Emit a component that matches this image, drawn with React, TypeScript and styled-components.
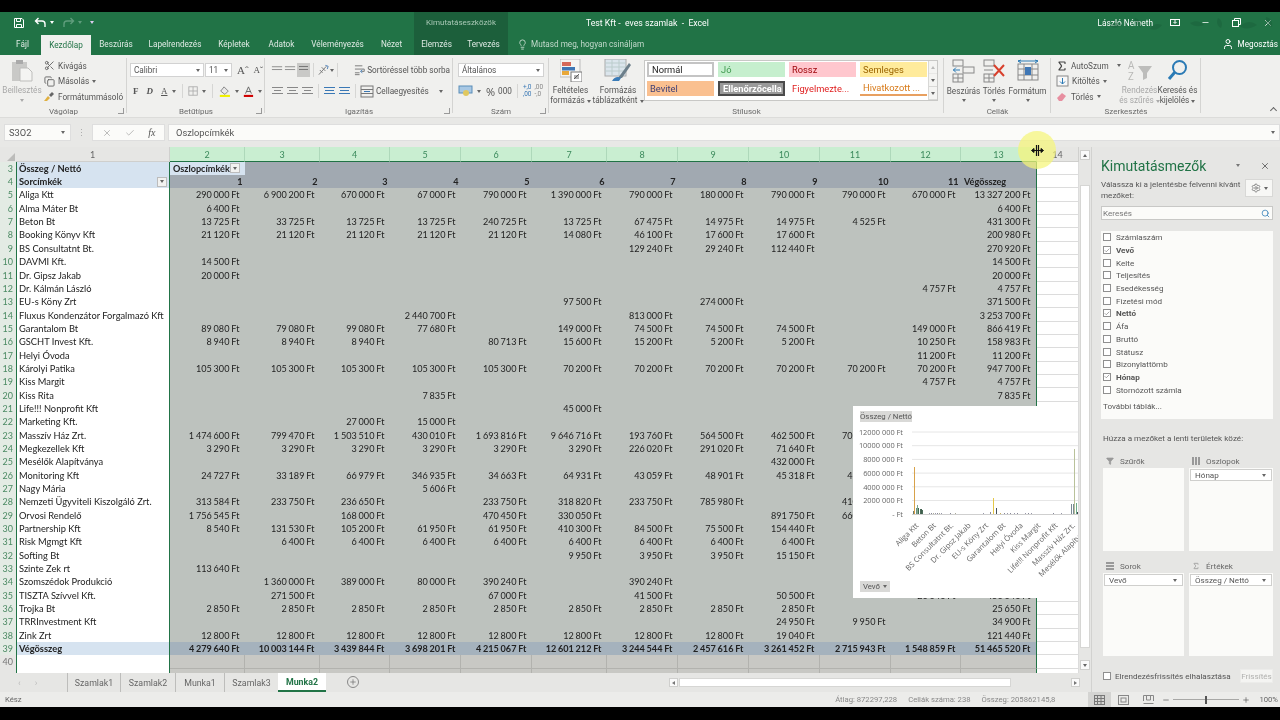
import React from 'react';
import styled, { createGlobalStyle } from 'styled-components';
import { Copy, Lightbulb, Minus, Plus, Scissors, Search, User, X, Check, Filter, Sigma, Settings } from 'lucide-react';

const GlobalStyle = createGlobalStyle`
  html, body { margin: 0; padding: 0; background: #000; }
  * { box-sizing: border-box; }
  #root { width: 1280px; height: 720px; overflow: hidden; }
`;

const uiFont = `Roboto, "Open Sans", sans-serif`;
const cellFont = `Lato, "Open Sans", sans-serif`;

const Page = styled.div`
  width: 1280px;
  height: 720px;
  display: flex;
  flex-direction: column;
  background: #000;
  font-family: ${uiFont};
  font-size: 8.2px;
  color: #444;
  filter: blur(0.3px);
  overflow: hidden;
`;

const BlackBar = styled.div<{ $h: number }>`
  height: ${p => p.$h}px;
  flex: none;
  background: #000;
`;

/* title bar */
const TitleBar = styled.div`
  position: relative;
  height: 21px;
  flex: none;
  display: flex;
  align-items: stretch;
  background: #217346;
  color: #fff;
  overflow: hidden;
`;

const QuickAccess = styled.div`
  width: 414px;
  display: flex;
  align-items: center;
  gap: 3px;
  padding-left: 13px;
  color: #fff;
`;

const ContextBlock = styled.div`
  width: 94px;
  display: flex;
  align-items: center;
  justify-content: center;
  background: #1c5f3b;
  color: #a9c9b6;
  font-size: 8px;
`;

const DocTitle = styled.div`
  margin-left: 78px;
  display: flex;
  align-items: center;
  font-size: 8.7px;
  white-space: pre;
`;

const UserArea = styled.div`
  margin-left: auto;
  margin-right: -3px;
  display: flex;
  align-items: center;
  font-size: 8.3px;
`;

const UserName = styled.span`
  margin-right: 6px;
`;

const WinButton = styled.span`
  width: 31px;
  display: flex;
  justify-content: center;
`;

const Leaves = styled.svg`
  position: absolute;
  right: 0;
  top: 0;
  opacity: 0.45;
  pointer-events: none;
`;

/* tab row */
const TabRow = styled.div`
  height: 22px;
  flex: none;
  display: flex;
  align-items: stretch;
  padding-left: 4px;
  background: #217346;
  color: #e8f1ec;
  position: relative;
`;

const Tab = styled.div<{ $w: number; $active?: boolean }>`
  width: ${p => p.$w}px;
  display: flex;
  align-items: center;
  justify-content: center;
  margin-top: ${p => (p.$active ? 2 : 0)}px;
  background: ${p => (p.$active ? '#f0f0ee' : 'transparent')};
  color: ${p => (p.$active ? '#217346' : '#dfeae4')};
`;

const ContextTabs = styled.div`
  display: flex;
  margin-left: 2px;
  background: #1c5f3b;
`;

const TellMe = styled.div`
  display: flex;
  align-items: center;
  gap: 3px;
  margin-left: 9px;
  color: #c2d9cb;
`;

const Share = styled.div`
  margin-left: auto;
  padding-right: 2px;
  display: flex;
  align-items: center;
  gap: 4px;
  color: #fff;
`;

/* ribbon */
const Ribbon = styled.div`
  height: 63px;
  flex: none;
  display: flex;
  position: relative;
  background: #f0f0ee;
  border-bottom: 1px solid #dcdcda;
  color: #555;
`;

const Group = styled.div<{ $w: number }>`
  width: ${p => p.$w}px;
  flex: none;
  display: flex;
  flex-direction: column;
  position: relative;
  &::after {
    content: '';
    position: absolute;
    right: 0;
    top: 3px;
    bottom: 4px;
    width: 1px;
    background: #d4d4d2;
  }
`;

const GroupBody = styled.div`
  height: 51px;
  display: flex;
  flex: none;
`;

const GroupLabel = styled.div`
  text-align: center;
  color: #6a6a6a;
  font-size: 8px;
  line-height: 11px;
`;

const Launcher = styled.span`
  position: absolute;
  right: 3px;
  bottom: 3px;
  width: 6px;
  height: 6px;
  border-right: 1px solid #999;
  border-bottom: 1px solid #999;
`;

const Caret = styled.span<{ $color?: string }>`
  display: inline-block;
  width: 0;
  height: 0;
  flex: none;
  border-left: 2.5px solid transparent;
  border-right: 2.5px solid transparent;
  border-top: 3px solid ${p => p.$color || '#666'};
`;

const BigButton = styled.div<{ $w: number; $muted?: boolean }>`
  width: ${p => p.$w}px;
  flex: none;
  display: flex;
  flex-direction: column;
  align-items: center;
  padding-top: 4px;
  line-height: 10px;
  text-align: center;
  white-space: nowrap;
  color: ${p => (p.$muted ? '#a8a8a8' : '#555')};
  svg { flex: none; margin-bottom: 3px; }
`;

const SmallColumn = styled.div`
  display: flex;
  flex-direction: column;
  padding-top: 3px;
  gap: 0;
`;

const SmallButton = styled.div<{ $muted?: boolean }>`
  height: 15.5px;
  display: flex;
  align-items: center;
  gap: 3px;
  white-space: nowrap;
  color: ${p => (p.$muted ? '#a8a8a8' : '#555')};
`;

const ControlStack = styled.div`
  display: flex;
  flex-direction: column;
  gap: 7px;
  padding: 8px 3px 0 3px;
  width: 100%;
`;

const ControlRow = styled.div<{ $gap?: number }>`
  height: 14px;
  display: flex;
  align-items: center;
  gap: ${p => p.$gap ?? 4}px;
  white-space: nowrap;
`;

const SelectBox = styled.div<{ $w: number }>`
  width: ${p => p.$w}px;
  height: 14px;
  flex: none;
  display: flex;
  align-items: center;
  justify-content: space-between;
  padding: 0 3px;
  background: #fff;
  border: 1px solid #d2d2d2;
  color: #555;
`;

const Glyph = styled.span<{ $bold?: boolean; $italic?: boolean; $under?: boolean; $size?: number; $ml?: number }>`
  font-family: "Liberation Serif", serif;
  font-size: ${p => p.$size ?? 9}px;
  font-weight: ${p => (p.$bold ? 700 : 400)};
  font-style: ${p => (p.$italic ? 'italic' : 'normal')};
  text-decoration: ${p => (p.$under ? 'underline' : 'none')};
  margin-left: ${p => p.$ml ?? 0}px;
  color: #555;
`;

const Divider = styled.span`
  width: 1px;
  height: 14px;
  background: #d6d6d4;
  margin: 0 2px;
`;

const Spacer = styled.span<{ $w: number }>`
  width: ${p => p.$w}px;
  flex: none;
`;

const ActiveAlign = styled.span`
  display: flex;
  width: 14px;
  height: 14px;
  align-items: center;
  justify-content: center;
  background: #c9c9c7;
`;

const Gallery = styled.div`
  margin: 5px 0 0 0;
  width: 294px;
  height: 41px;
  display: flex;
  background: #fff;
  border: 1px solid #c8c8c6;
`;

const StyleGrid = styled.div`
  flex: 1;
  display: grid;
  grid-template-columns: repeat(4, 67px);
  grid-auto-rows: 15px;
  column-gap: 4px;
  row-gap: 4px;
  padding: 1px 0 0 2px;
`;

const StyleCell = styled.div<{ $bg: string; $fg: string; $border?: string; $bold?: boolean; $under?: string }>`
  height: 15px;
  display: flex;
  align-items: center;
  padding-left: 3px;
  background: ${p => p.$bg};
  color: ${p => p.$fg};
  border: ${p => p.$border || 'none'};
  border-bottom: ${p => (p.$under ? `2px solid ${p.$under}` : p.$border || 'none')};
  font-weight: ${p => (p.$bold ? 700 : 400)};
  font-size: 9.3px;
  white-space: nowrap;
`;

const GalleryScroll = styled.div`
  width: 9px;
  display: flex;
  flex-direction: column;
  border-left: 1px solid #d8d8d6;
  background: #f4f4f2;
`;

const ScrollCell = styled.div<{ $muted?: boolean }>`
  flex: 1;
  display: flex;
  align-items: center;
  justify-content: center;
  border-bottom: 1px solid #d8d8d6;
  opacity: ${p => (p.$muted ? 0.4 : 1)};
`;

const CollapseRibbon = styled.span`
  position: absolute;
  right: 4px;
  bottom: 4px;
  width: 5px;
  height: 5px;
  border-left: 1px solid #666;
  border-top: 1px solid #666;
  transform: rotate(45deg);
`;

/* formula bar */
const FormulaRow = styled.div`
  height: 29px;
  flex: none;
  display: flex;
  align-items: flex-start;
  padding: 6px 0 0 4px;
  background: #e8e8e6;
  color: #555;
  font-size: 9.3px;
`;

const NameBox = styled.div`
  width: 67px;
  height: 17px;
  flex: none;
  display: flex;
  align-items: center;
  justify-content: space-between;
  padding: 0 5px 0 4px;
  background: #fbfbf9;
  border: 1px solid #dedede;
`;

const FormulaDots = styled.div`
  width: 21px;
  height: 17px;
  flex: none;
  display: flex;
  align-items: center;
  justify-content: center;
  color: #aaa;
`;

const FormulaButtons = styled.div`
  width: 73px;
  height: 17px;
  flex: none;
  display: flex;
  align-items: center;
  justify-content: space-around;
  padding: 0 2px;
  background: #fbfbf9;
  border: 1px solid #dedede;
  color: #9a9a9a;
`;

const FormulaInput = styled.div`
  flex: 1;
  height: 17px;
  margin-left: 3px;
  display: flex;
  align-items: center;
  justify-content: space-between;
  padding: 0 4px 0 7px;
  background: #fbfbf9;
  border: 1px solid #dedede;
`;

/* workspace */
const Workspace = styled.div`
  flex: none;
  height: 545px;
  display: flex;
`;

const SheetPane = styled.div`
  width: 1091px;
  flex: none;
  display: flex;
  flex-direction: column;
  position: relative;
  background: #e6e6e4;
`;

const SheetRow = styled.div`
  flex: 1;
  min-height: 0;
  display: flex;
`;

const Sheet = styled.div`
  width: 1079px;
  height: 526px;
  flex: none;
  display: grid;
  grid-template-columns: 16px 154px 75px 75px 70px 71px 71px 75px 71px 71px 71px 71px 70px 76px 42px;
  grid-template-rows: 14.6px;
  grid-auto-rows: 13.35px;
  overflow: hidden;
  background: #fff;
  font-family: ${cellFont};
  font-size: 9.3px;
  color: #222;
`;

const Corner = styled.div`
  background: #e6e6e4;
  position: relative;
  &::after {
    content: '';
    position: absolute;
    right: 1px;
    bottom: 1px;
    border-left: 8px solid transparent;
    border-bottom: 8px solid #bcbcba;
  }
`;

const ColHead = styled.div<{ $on?: boolean }>`
  display: flex;
  align-items: center;
  justify-content: center;
  background: ${p => (p.$on ? '#c9eed1' : '#e6e6e4')};
  color: ${p => (p.$on ? '#3b8a5c' : '#666')};
  border-right: 1px solid ${p => (p.$on ? '#aed8ba' : '#d0d0ce')};
  border-bottom: 1px solid ${p => (p.$on ? '#217346' : '#cfcfcd')};
  font-size: 9px;
  padding-top: 1px;
`;

const RowHead = styled.div<{ $on?: boolean }>`
  display: flex;
  align-items: center;
  justify-content: flex-end;
  padding-right: 3px;
  background: ${p => (p.$on ? '#e3ebe4' : '#e6e6e4')};
  color: ${p => (p.$on ? '#4b8a63' : '#777')};
  font-size: 9px;
  overflow: hidden;
`;

const NameCell = styled.div<{ $kind: 'plain' | 'head' | 'total' | 'blank' }>`
  display: flex;
  align-items: center;
  justify-content: space-between;
  padding-left: 2px;
  background: ${p => (p.$kind === 'plain' || p.$kind === 'blank' ? '#fff' : '#d6e3f0')};
  font-weight: ${p => (p.$kind === 'head' || p.$kind === 'total' ? 700 : 400)};
  border-left: 1px solid #217346;
  border-right: 1.5px solid #217346;
  white-space: nowrap;
  overflow: hidden;
`;

const ValueCell = styled.div<{ $kind: 'plain' | 'head' | 'total' | 'blank' | 'pivotLabel' | 'free'; $end?: boolean; $left?: boolean }>`
  display: flex;
  align-items: center;
  justify-content: ${p => (p.$left ? 'flex-start' : 'flex-end')};
  padding: 0 ${p => (p.$kind === 'head' ? 2.5 : 5.5)}px 0 ${p => (p.$left ? 3 : 0)}px;
  white-space: pre;
  font-size: 9.1px;
  word-spacing: -0.45px;
  overflow: hidden;
  font-weight: ${p => (p.$kind === 'plain' || p.$kind === 'blank' || p.$kind === 'free' ? 400 : 700)};
  background: ${p =>
    ({ plain: '#bdc2be', head: '#a1a9b1', total: '#a5b2bd', blank: '#c8c8c4', pivotLabel: '#d6e3f0', free: '#fff' })[p.$kind]};
  border-right: ${p =>
    p.$end ? '1.5px solid #217346' : p.$kind === 'free' ? '1px solid #dcdcdc' : p.$kind === 'blank' ? '1px solid #b2b2ae' : 'none'};
  border-bottom: ${p =>
    p.$kind === 'free' ? '1px solid #dcdcdc' : p.$kind === 'blank' ? '1px solid #b2b2ae' : 'none'};
`;

const PivotLabel = styled.span`
  flex: 1;
`;

const FilterBtn = styled.span`
  width: 10px;
  height: 10px;
  flex: none;
  display: flex;
  align-items: center;
  justify-content: center;
  margin-right: 2px;
  background: #f2f2f0;
  border: 1px solid #bcbcbc;
`;

const VScroll = styled.div`
  width: 12px;
  height: 526px;
  flex: none;
  display: flex;
  flex-direction: column;
  padding: 3px 1px;
  gap: 0;
  background: #e6e6e4;
`;

const ScrollBtn = styled.div`
  height: 10px;
  flex: none;
  display: flex;
  align-items: center;
  justify-content: center;
  background: #fafafa;
  border: 1px solid #cfcfcd;
`;

const VThumbGap = styled.div`
  height: 25px;
  flex: none;
`;

const VThumb = styled.div`
  flex: 1;
  background: #fff;
  border: 1px solid #d6d6d4;
  margin-bottom: 12px;
`;

/* sheet tabs and horizontal scrollbar */
const TabsBar = styled.div`
  height: 19px;
  flex: none;
  display: flex;
  align-items: stretch;
  background: #e6e6e4;
  color: #666;
  font-size: 8.8px;
`;

const TabNav = styled.div`
  width: 67px;
  display: flex;
  align-items: center;
  gap: 14px;
  padding-left: 18px;
  color: #bbb;
`;

const SheetTab = styled.div<{ $w: number; $active?: boolean }>`
  width: ${p => p.$w}px;
  display: flex;
  align-items: center;
  justify-content: center;
  background: ${p => (p.$active ? '#fff' : 'transparent')};
  color: ${p => (p.$active ? '#217346' : '#666')};
  font-weight: ${p => (p.$active ? 700 : 400)};
  border-left: ${p => (p.$active ? 'none' : '1px solid #bdbdbb')};
  border-bottom: ${p => (p.$active ? '2px solid #217346' : 'none')};
`;

const AddSheet = styled.div`
  width: 12px;
  height: 12px;
  margin: 3px 0 0 21px;
  display: flex;
  align-items: center;
  justify-content: center;
  border: 1px solid #888;
  border-radius: 50%;
`;

const HScroll = styled.div`
  margin-left: auto;
  width: 424px;
  display: flex;
  align-items: center;
  padding: 0 11px 0 2px;
  gap: 1px;
`;

const HThumb = styled.div`
  width: 332px;
  height: 9px;
  background: #fff;
  border: 1px solid #d6d6d4;
`;

const HTrack = styled.div`
  flex: 1;
`;

const HEnd = styled.div`
  width: 9px;
  height: 9px;
  flex: none;
  display: flex;
  align-items: center;
  justify-content: center;
  background: #fafafa;
  border: 1px solid #cfcfcd;
`;

const ArrowSide = styled.span<{ $flip?: boolean }>`
  width: 0;
  height: 0;
  border-top: 2.5px solid transparent;
  border-bottom: 2.5px solid transparent;
  border-left: 3px solid #777;
  transform: ${p => (p.$flip ? 'scaleX(-1)' : 'none')};
`;

/* chart and pointer, both on top of the sheet */
const ChartCard = styled.div`
  position: absolute;
  left: 853px;
  top: 259px;
  width: 225px;
  height: 192px;
  background: #fff;
  overflow: hidden;
`;

const ChartField = styled.div<{ $top: number; $w: number }>`
  position: absolute;
  left: 7px;
  top: ${p => p.$top}px;
  width: ${p => p.$w}px;
  height: 11px;
  display: flex;
  align-items: center;
  justify-content: center;
  gap: 3px;
  background: #d9d9d7;
  color: #555;
  font-size: 7.8px;
  white-space: nowrap;
`;

const PointerHalo = styled.div`
  position: absolute;
  left: 1018px;
  top: -16px;
  width: 38px;
  height: 38px;
  display: flex;
  align-items: center;
  justify-content: center;
  background: rgba(245, 245, 120, 0.72);
  border-radius: 50%;
`;

/* task pane */
const Pane = styled.aside`
  width: 189px;
  flex: none;
  display: flex;
  flex-direction: column;
  padding: 9px 7px 0 9px;
  background: #e6e6e4;
  border-left: 1px solid #d2d2d0;
  color: #555;
`;

const PaneHead = styled.div`
  display: flex;
  align-items: center;
  justify-content: space-between;
  height: 19px;
`;

const PaneTitle = styled.div`
  color: #217346;
  font-size: 14px;
`;

const PaneTools = styled.div`
  display: flex;
  align-items: center;
  gap: 20px;
  padding-right: 3px;
`;

const ChooseRow = styled.div`
  display: flex;
  justify-content: space-between;
  align-items: flex-start;
  margin-top: 4px;
  height: 23px;
  line-height: 10.5px;
  font-size: 8.1px;
`;

const ToolsBtn = styled.div`
  width: 28px;
  height: 18px;
  flex: none;
  display: flex;
  align-items: center;
  justify-content: center;
  gap: 3px;
  background: #f7f7f5;
  border: 1px solid #d8d8d6;
`;

const SearchBox = styled.div`
  margin-top: 4px;
  height: 14px;
  display: flex;
  align-items: center;
  justify-content: space-between;
  padding: 0 2px 0 1px;
  background: #fbfbf9;
  border: 1px solid #c8c8c6;
  color: #777;
  font-size: 8.1px;
`;

const FieldList = styled.div`
  margin-top: 11px;
  height: 188px;
  padding: 0 0 0 2px;
  display: flex;
  flex-direction: column;
  background: #fbfbf9;
  font-size: 8.1px;
`;

const FieldRow = styled.div<{ $on?: boolean }>`
  height: 12.7px;
  flex: none;
  display: flex;
  align-items: center;
  gap: 5px;
  font-weight: ${p => (p.$on ? 700 : 400)};
`;

const Box = styled.span`
  width: 8px;
  height: 8px;
  flex: none;
  display: flex;
  align-items: center;
  justify-content: center;
  background: #fff;
  border: 1px solid #8f8f8f;
  color: #555;
`;

const MoreTables = styled.div`
  margin-top: 5px;
`;

const DragHint = styled.div`
  margin: 14px 0 0 2px;
  font-size: 8.1px;
  height: 12px;
`;

const AreaGrid = styled.div`
  display: grid;
  grid-template-columns: 81px 84px;
  column-gap: 5px;
  margin-top: 9px;
  margin-left: 2px;
`;

const Area = styled.div`
  display: flex;
  flex-direction: column;
  height: 105px;
`;

const AreaHead = styled.div`
  height: 14px;
  display: flex;
  align-items: center;
  gap: 6px;
  padding-left: 3px;
  font-size: 8.1px;
  color: #666;
`;

const AreaBody = styled.div`
  height: 83px;
  padding: 1px;
  background: #fbfbf9;
`;

const AreaChip = styled.div`
  height: 12px;
  display: flex;
  align-items: center;
  justify-content: space-between;
  padding: 0 5px 0 4px;
  background: #fff;
  border: 1px solid #cfcfcd;
  font-size: 8.1px;
`;

const DeferRow = styled.div`
  margin: 3px 0 0 2px;
  display: flex;
  align-items: center;
  gap: 4px;
  height: 18px;
  font-size: 8.1px;
`;

const RefreshBtn = styled.div`
  margin-left: auto;
  width: 33px;
  height: 14px;
  display: flex;
  align-items: center;
  justify-content: center;
  background: #f4f4f2;
  color: #b0b0ae;
  border: 1px solid #ececea;
`;

/* status bar */
const StatusBar = styled.div`
  height: 15px;
  flex: none;
  display: flex;
  align-items: center;
  padding-left: 5px;
  background: #ececea;
  color: #666;
  font-size: 7.7px;
`;

const Stats = styled.div`
  margin-left: auto;
  display: flex;
  gap: 11px;
  color: #888;
`;

const ViewBtns = styled.div`
  margin-left: 33px;
  display: flex;
  align-items: center;
  height: 100%;
`;

const ViewBtn = styled.span<{ $on?: boolean; $w: number }>`
  width: ${p => p.$w}px;
  height: 100%;
  display: flex;
  align-items: center;
  justify-content: center;
  background: ${p => (p.$on ? '#d4d4d2' : 'transparent')};
`;

const ZoomArea = styled.div`
  display: flex;
  align-items: center;
  margin-left: 1px;
  gap: 3px;
  padding-right: 2px;
`;

const ZoomTrack = styled.span`
  width: 66px;
  height: 1px;
  background: #a8a8a6;
  display: flex;
  align-items: center;
  justify-content: center;
`;

const ZoomThumb = styled.span`
  width: 2px;
  height: 8px;
  background: #555;
`;

const ZoomValue = styled.span`
  margin-left: 6px;
`;

/* ---------- drawings ---------- */
const SaveIcon = () => (
  <svg width="12" height="12" viewBox="0 0 12 12" fill="none" stroke="#fff">
    <path d="M1.5 1.5h7.5l1.5 1.5v7.5h-9z" />
    <path d="M3.5 1.5v3h4v-3M3.5 10.5v-3h5v3" />
  </svg>
);
const UndoIcon = ({ c }: { c: string }) => (
  <svg width="13" height="11" viewBox="0 0 13 11" fill="none" stroke={c} strokeWidth="1.4">
    <path d="M4.5 1L1.5 4l3 3M2 4h6a3 3 0 0 1 3 3v3" />
  </svg>
);
const RedoIcon = ({ c }: { c: string }) => (
  <svg width="13" height="11" viewBox="0 0 13 11" fill="none" stroke={c} strokeWidth="1.4">
    <path d="M8.5 1l3 3-3 3M11 4H5a3 3 0 0 0-3 3v3" />
  </svg>
);
const PasteIcon = () => (
  <svg width="22" height="23" viewBox="0 0 22 23">
    <rect x="1" y="3" width="15" height="19" fill="#c9c9c7" />
    <rect x="5" y="1" width="7" height="4" fill="#aaa" />
    <path d="M9 9h8l4 4v9H9z" fill="#f4f4f2" stroke="#bdbdbb" />
  </svg>
);
const BrushIcon = () => (
  <svg width="11" height="11" viewBox="0 0 11 11">
    <path d="M0 10l4-5 2 2-3 3z" fill="#e0b040" />
    <path d="M5 4l3-3 2 2-3 3z" fill="#666" />
  </svg>
);
const AlignLines = ({ rows, c = '#888' }: { rows: number[]; c?: string }) => (
  <svg width="13" height="12" viewBox="0 0 13 12" stroke={c}>
    {rows.map((w, i) => (
      <line key={i} x1={(13 - w) / 2} x2={(13 + w) / 2} y1={2.5 + i * 3} y2={2.5 + i * 3} />
    ))}
  </svg>
);
const OrientIcon = () => (
  <svg width="13" height="12" viewBox="0 0 13 12" fill="none" stroke="#777">
    <path d="M2 11l8-9M5 3l4 4M3 6l3 3" />
    <path d="M9 1l3 1-1 3" stroke="#4a7db5" />
  </svg>
);
const WrapIcon = () => (
  <svg width="13" height="12" viewBox="0 0 13 12" fill="none" stroke="#777">
    <path d="M1 1.5h8M1 5h10v2.5H8M1 9h5M1 11h5" />
    <path d="M9 6l-2 1.5L9 9" stroke="#3a78b5" />
  </svg>
);
const MergeIcon = () => (
  <svg width="14" height="13" viewBox="0 0 14 13" fill="none" stroke="#777">
    <rect x="1" y="1" width="12" height="11" />
    <path d="M1 4.5h12M1 8.5h12" />
    <path d="M4 6.5h6" stroke="#3a78b5" />
  </svg>
);
const BordersIcon = () => (
  <svg width="12" height="12" viewBox="0 0 12 12" fill="none" stroke="#aaa">
    <rect x="1" y="1" width="10" height="10" />
    <path d="M6 1v10M1 6h10" />
  </svg>
);
const FillIcon = () => (
  <svg width="14" height="13" viewBox="0 0 14 13">
    <path d="M6 1l5 5-4 4-5-4z" fill="#e8e8e8" stroke="#777" />
    <rect x="1" y="10.5" width="12" height="2.5" fill="#f0f000" />
  </svg>
);
const FontColorIcon = () => (
  <svg width="13" height="13" viewBox="0 0 13 13">
    <path d="M3 9l3.5-8 3.500 8M4.500 6.500h4" fill="none" stroke="#555" />
    <rect x="1" y="10.500" width="11" height="2.500" fill="#d00000" />
  </svg>
);
const MoneyIcon = () => (
  <svg width="16" height="12" viewBox="0 0 16 12">
    <rect x="1" y="1" width="13" height="7" fill="#a8c8e4" stroke="#5a8db8" />
    <circle cx="8" cy="8" r="3" fill="#e0c860" />
  </svg>
);
const CondIcon = () => (
  <svg width="22" height="23" viewBox="0 0 22 23">
    <rect x="0" y="0" width="20" height="18" fill="#f4f4f2" stroke="#bbb" />
    <rect x="2" y="3" width="9" height="4" fill="#d66a5a" />
    <rect x="2" y="8" width="13" height="3.500" fill="#3f77b5" />
    <rect x="2" y="12" width="7" height="4" fill="#e8a83a" />
    <rect x="11" y="13" width="11" height="10" fill="#fff" stroke="#777" />
    <path d="M14 20l5-5M14 17h5M14 19h5" stroke="#444" strokeWidth=".8" />
  </svg>
);
const TableStyleIcon = () => (
  <svg width="28" height="23" viewBox="0 0 28 23">
    <rect x="1" y="0" width="21" height="17" fill="#dbe5ec" stroke="#aaa" />
    <path d="M1 4h21M1 8h21M1 12h21M8 0v17M15 0v17" stroke="#bcc" />
    <path d="M14 19l11-15 2 2-9 13z" fill="#6c7f8a" />
    <path d="M8 22c2-4 6-5 9-3l-2 3z" fill="#3a7cb8" />
  </svg>
);
const InsertIcon = () => (
  <svg width="23" height="24" viewBox="0 0 23 24" fill="none" stroke="#888">
    <rect x="1" y="1" width="10" height="6" />
    <rect x="1" y="15" width="10" height="8" />
    <path d="M6 15v8M1 19h10" />
    <rect x="11" y="8" width="11" height="6" />
    <path d="M1 11h7M4 8.500L1.500 11 4 13.500" stroke="#2a7ab5" />
  </svg>
);
const DeleteIcon = () => (
  <svg width="23" height="24" viewBox="0 0 23 24" fill="none" stroke="#888">
    <rect x="1" y="1" width="10" height="6" />
    <rect x="1" y="15" width="10" height="8" />
    <path d="M6 15v8M1 19h10M1 11h9" />
    <path d="M11 6l10 11M21 6L11 17" stroke="#d8402c" strokeWidth="2" />
  </svg>
);
const FormatIcon = () => (
  <svg width="24" height="24" viewBox="0 0 24 24" fill="none" stroke="#888">
    <rect x="2" y="5" width="20" height="16" />
    <path d="M8 5v16M16 5v16M2 10h20M2 16h20" />
    <rect x="9" y="8" width="6" height="8" fill="#3f77b5" stroke="none" />
    <path d="M2 2h20M5 1L2 2l3 2M19 1l3 1-3 2" stroke="#2a7ab5" />
  </svg>
);
const FillDownIcon = () => (
  <svg width="13" height="12" viewBox="0 0 13 12">
    <rect x="1" y="1" width="11" height="10" fill="#f8f8f8" stroke="#888" />
    <path d="M6.500 3v6M4 6.500l2.500 2.500L9 6.500" stroke="#2a7ab5" fill="none" />
  </svg>
);
const EraserIcon = () => (
  <svg width="12" height="11" viewBox="0 0 12 11">
    <path d="M1 7l5-5 4 3-4 5H3z" fill="#e78fa0" />
  </svg>
);
const SortIcon = () => (
  <svg width="26" height="23" viewBox="0 0 26 23" fill="none">
    <text x="1" y="10" fontSize="10" fill="#b8b8b6" fontFamily="Open Sans">A</text>
    <text x="1" y="21" fontSize="10" fill="#b8b8b6" fontFamily="Open Sans">Z</text>
    <path d="M11 7h14l-5 7v5l-4 2v-7z" fill="#bdbdbb" />
  </svg>
);
const FindIcon = () => (
  <svg width="21" height="23" viewBox="0 0 21 23" fill="none" stroke="#2a7ab5">
    <circle cx="12.500" cy="8.500" r="6.500" strokeWidth="2" />
    <path d="M8 13l-6 7" strokeWidth="3" />
  </svg>
);
const LeafPattern = () => (
  <Leaves width="190" height="21" viewBox="0 0 190 21" fill="#1a5f39">
    <path d="M20 14c5-4 9-4 12-1-4 3-8 4-12 1zM45 6c4 1 7 5 6 10-4-2-7-5-6-10zM60 17c3-5 7-6 12-4-3 4-7 6-12 4z" />
    <path d="M100 11c6-3 10-2 14 2-5 2-10 2-14-2zM128 6c4 2 5 6 3 10-4-2-5-6-3-10z" />
    <path d="M150 14c6-5 12-5 17-1-6 4-12 5-17 1zM176 5c5 1 7 5 6 10-5-2-7-5-6-10z" />
  </Leaves>
);
const MoveCursor = () => (
  <svg width="13" height="11" viewBox="0 0 13 11" stroke="#111" fill="#111">
    <path d="M5.500 0v11M7.500 0v11" strokeWidth="1.200" />
    <path d="M.5 5.500l2.500-2v4zM12.500 5.500l-2.500-2v4z" />
    <path d="M3 5.500h7" strokeWidth="1" />
  </svg>
);
const FrozenIcon = () => (
  <svg width="8" height="8" viewBox="0 0 8 8" fill="#999">
    <rect x="0" y="0" width="2" height="8" />
    <rect x="3" y="0" width="2" height="8" />
    <rect x="6" y="0" width="2" height="8" />
  </svg>
);
const RowsIcon = () => (
  <svg width="8" height="8" viewBox="0 0 8 8" fill="#999">
    <rect x="0" y="0" width="8" height="2" />
    <rect x="0" y="3" width="8" height="2" />
    <rect x="0" y="6" width="8" height="2" />
  </svg>
);
const NormalView = () => (
  <svg width="11" height="10" viewBox="0 0 11 10" fill="none" stroke="#777">
    <rect x=".5" y=".5" width="10" height="9" />
    <path d="M3.500 0v10M7 0v10M0 3.500h11M0 6.500h11" />
  </svg>
);
const LayoutView = () => (
  <svg width="11" height="10" viewBox="0 0 11 10" fill="none" stroke="#888">
    <rect x=".5" y=".5" width="10" height="9" />
    <rect x="3" y="3" width="5" height="4" />
  </svg>
);
const BreakView = () => (
  <svg width="11" height="10" viewBox="0 0 11 10" fill="none" stroke="#888">
    <path d="M.5 6V.5h10V6M.5 8.500h10M3.500 1v4h4V1" />
  </svg>
);

const chartTicks = ['12000 000 Ft', '10000 000 Ft', '8000 000 Ft', '6000 000 Ft', '4000 000 Ft', '2000 000 Ft', '- Ft'];
const chartNames = ['Aliga Ktt', 'Beton Bt', 'BS Consultatnt Bt.', 'Dr. Gipsz Jakab', 'EU-s Köny Zrt', 'Garantalom Bt', 'Helyi Óvoda', 'Kiss Margit', 'Life!!! Nonprofit Kft', 'Masszív Ház Zrt.', 'Mesélők Alapítványa'];
const chartBars: [number, number, string][] = [
  [61, 47, '#d8a24a'], [60, 3, '#6a7a70'], [63, 6, '#6f8f80'], [64, 9, '#7fa88e'], [65, 6, '#3f6a52'],
  [67, 5, '#4a6a58'], [68, 5, '#3f5f4c'], [69, 4, '#4a6a58'],
  [76, 1, '#99a'], [78, 1, '#889'], [80, 1, '#aa9'], [82, 1, '#99a'], [84, 1, '#889'], [86, 1, '#aa9'], [88, 1, '#99a'],
  [97, 1, '#889'], [102, 1, '#aa9'], [130, 1, '#99a'], [137, 2, '#889'], [140, 16, '#e4c84a'], [143, 6, '#44505a'],
  [147, 1, '#c9b060'], [151, 1, '#889'], [154, 1, '#99a'], [157, 1, '#889'], [161, 1, '#99a'], [164, 1, '#889'], [172, 1, '#99a'], [175, 1, '#889'], [178, 1, '#99a'],
  [200, 1, '#889'], [208, 1, '#99a'], [218, 10, '#7a8a94'], [220, 10, '#7a8a94'], [221, 65, '#b9c29a'], [223, 11, '#6fae8a'], [225, 4, '#d8a24a'], [224, 2, '#445'],
];

const Chart = () => (
  <ChartCard>
    <ChartField $top={5} $w={52}>Összeg / Nettó</ChartField>
    <svg width="225" height="192" viewBox="0 0 225 192">
      {chartTicks.map((t, i) => {
        const y = 26 + i * 13.7;
        return (
          <g key={t}>
            {i < 6 && <line x1="59" x2="225" y1={y} y2={y} stroke="#e6e6e6" />}
            <text x="50" y={y + 2.7} textAnchor="end" fontSize="7.4" fill="#666" fontFamily="Open Sans">{t}</text>
          </g>
        );
      })}
      <line x1="59" x2="225" y1="108.500" y2="108.500" stroke="#cfcfcf" />
      {chartBars.map(([x, h, c], i) => (
        <rect key={i} x={x} y={108 - h} width="1" height={h} fill={c} />
      ))}
      {chartNames.map((n, i) => (
        <text
          key={n}
          x={66 + i * 17.4}
          y={120}
          textAnchor="end"
          fontSize="7.6"
          fill="#666"
          fontFamily="Open Sans"
          transform={`rotate(-45 ${66 + i * 17.4} 120)`}
        >
          {n}
        </text>
      ))}
    </svg>
    <ChartField $top={175} $w={30}>Vevő <Caret /></ChartField>
  </ChartCard>
);

/* ---------- data ---------- */
type Row = { n: number; name: string; v: string[] };
const ft = (s: string) => (s ? `${s} Ft` : '');
const r = (n: number, name: string, ...vals: string[]): Row => {
  const v = Array(12).fill('');
  vals.forEach((x, i) => (v[i] = ft(x)));
  return { n, name, v };
};

const rows: Row[] = [
  r(5, 'Aliga Ktt', '290 000', '6 900 200', '670 000', '67 000', '790 000', '1 390 000', '790 000', '180 000', '790 000', '790 000', '670 000', '13 327 200'),
  r(6, 'Alma Máter Bt', '6 400', '', '', '', '', '', '', '', '', '', '', '6 400'),
  r(7, 'Beton Bt', '13 725', '33 725', '13 725', '13 725', '240 725', '13 725', '67 475', '14 975', '14 975', '4 525', '', '431 300'),
  r(8, 'Booking Könyv Kft', '21 120', '21 120', '21 120', '21 120', '21 120', '14 080', '46 100', '17 600', '17 600', '', '', '200 980'),
  r(9, 'BS Consultatnt Bt.', '', '', '', '', '', '', '129 240', '29 240', '112 440', '', '', '270 920'),
  r(10, 'DAVMI Kft.', '14 500', '', '', '', '', '', '', '', '', '', '', '14 500'),
  r(11, 'Dr. Gipsz Jakab', '20 000', '', '', '', '', '', '', '', '', '', '', '20 000'),
  r(12, 'Dr. Kálmán László', '', '', '', '', '', '', '', '', '', '', '4 757', '4 757'),
  r(13, 'EU-s Köny Zrt', '', '', '', '', '', '97 500', '', '274 000', '', '', '', '371 500'),
  r(14, 'Fluxus Kondenzátor Forgalmazó Kft', '', '', '', '2 440 700', '', '', '813 000', '', '', '', '', '3 253 700'),
  r(15, 'Garantalom Bt', '89 080', '79 080', '99 080', '77 680', '', '149 000', '74 500', '74 500', '74 500', '', '149 000', '866 419'),
  r(16, 'GSCHT Invest Kft.', '8 940', '8 940', '8 940', '', '80 713', '15 600', '15 200', '5 200', '5 200', '', '10 250', '158 983'),
  r(17, 'Helyi Óvoda', '', '', '', '', '', '', '', '', '', '', '11 200', '11 200'),
  r(18, 'Károlyi Patika', '105 300', '105 300', '105 300', '105 300', '105 300', '70 200', '70 200', '70 200', '70 200', '70 200', '70 200', '947 700'),
  r(19, 'Kiss Margit', '', '', '', '', '', '', '', '', '', '', '4 757', '4 757'),
  r(20, 'Kiss Rita', '', '', '', '7 835', '', '', '', '', '', '', '', '7 835'),
  r(21, 'Life!!! Nonprofit Kft', '', '', '', '', '', '45 000'),
  r(22, 'Marketing Kft.', '', '', '27 000', '15 000'),
  r(23, 'Masszív Ház Zrt.', '1 474 600', '799 470', '1 503 510', '430 010', '1 693 816', '9 646 716', '193 760', '564 500', '462 500', '702 500'),
  r(24, 'Megkezellek Kft', '3 290', '3 290', '3 290', '3 290', '3 290', '3 290', '226 020', '291 020', '71 640'),
  r(25, 'Mesélők Alapítványa', '', '', '', '', '', '', '', '', '432 000'),
  r(26, 'Monitoring Kft', '24 727', '33 189', '66 979', '346 935', '34 663', '64 931', '43 059', '48 901', '45 318', '45 318'),
  r(27, 'Nagy Mária', '', '', '', '5 606'),
  r(28, 'Nemzeti Ügyviteli Kiszolgáló Zrt.', '313 584', '233 750', '236 650', '', '233 750', '318 820', '233 750', '785 980', '', '410 300'),
  r(29, 'Orvosi Rendelő', '1 756 545', '', '168 000', '', '470 450', '330 050', '', '', '891 750', '660 500'),
  r(30, 'Partnership Kft', '8 540', '131 530', '105 200', '61 950', '61 950', '410 300', '84 500', '75 500', '154 440'),
  r(31, 'Risk Mgmgt Kft', '', '6 400', '6 400', '6 400', '6 400', '6 400', '6 400', '6 400', '6 400'),
  r(32, 'Softing Bt', '', '', '', '', '', '9 950', '3 950', '3 950', '15 150'),
  r(33, 'Szinte Zek rt', '113 640'),
  r(34, 'Szomszédok Produkció', '', '1 360 000', '389 000', '80 000', '390 240', '', '390 240'),
  r(35, 'TISZTA Szívvel Kft.', '', '271 500', '', '', '67 000', '', '41 500', '', '50 500', '', '20 640', '450 640'),
  r(36, 'Trojka Bt', '2 850', '2 850', '2 850', '2 850', '2 850', '2 850', '2 850', '2 850', '2 850', '', '', '25 650'),
  r(37, 'TRRInvestment Kft', '', '', '', '', '', '', '', '', '24 950', '9 950', '', '34 900'),
  r(38, 'Zink Zrt', '12 800', '12 800', '12 800', '12 800', '12 800', '12 800', '12 800', '12 800', '19 040', '', '', '121 440'),
];

const totals = ['4 279 640', '10 003 144', '3 439 844', '3 698 201', '4 215 067', '12 601 212', '3 244 544', '2 457 616', '3 261 452', '2 715 943', '1 548 859', '51 465 520'];
const colNames = Array.from({ length: 14 }, (_, i) => i + 1);

const fields: [string, boolean][] = [
  ['Számlaszám', false], ['Vevő', true], ['Kelte', false], ['Teljesítés', false], ['Esedékesség', false],
  ['Fizetési mód', false], ['Nettó', true], ['Áfa', false], ['Bruttó', false], ['Státusz', false],
  ['Bizonylattömb', false], ['Hónap', true], ['Stornózott számla', false],
];

/* ---------- sections ---------- */
const SheetGrid = () => (
  <Sheet>
    <Corner />
    {colNames.map(c => (
      <ColHead key={c} $on={c > 1 && c < 14}>{c}</ColHead>
    ))}

    <RowHead $on>3</RowHead>
    <NameCell $kind="head">Összeg / Nettó</NameCell>
    <ValueCell $kind="pivotLabel" $left>
      <PivotLabel>Oszlopcímkék</PivotLabel>
      <FilterBtn><Caret /></FilterBtn>
    </ValueCell>
    {Array.from({ length: 11 }, (_, i) => (
      <ValueCell key={i} $kind="head" $end={i === 10} />
    ))}
    <ValueCell $kind="free" />

    <RowHead $on>4</RowHead>
    <NameCell $kind="head">Sorcímkék<FilterBtn><Caret /></FilterBtn></NameCell>
    {Array.from({ length: 11 }, (_, i) => (
      <ValueCell key={i} $kind="head">{i + 1}</ValueCell>
    ))}
    <ValueCell $kind="head" $end $left>Végösszeg</ValueCell>
    <ValueCell $kind="free" />

    {rows.map(row => (
      <React.Fragment key={row.n}>
        <RowHead $on>{row.n}</RowHead>
        <NameCell $kind="plain">{row.name}</NameCell>
        {row.v.map((val, i) => (
          <ValueCell key={i} $kind="plain" $end={i === 11}>{val}</ValueCell>
        ))}
        <ValueCell $kind="free" />
      </React.Fragment>
    ))}

    <RowHead $on>39</RowHead>
    <NameCell $kind="total">Végösszeg</NameCell>
    {totals.map((val, i) => (
      <ValueCell key={i} $kind="total" $end={i === 11}>{ft(val)}</ValueCell>
    ))}
    <ValueCell $kind="free" />

    {[40, 41].map(n => (
      <React.Fragment key={n}>
        <RowHead>{n === 40 ? n : ''}</RowHead>
        <NameCell $kind="blank" />
        {totals.map((_, i) => (
          <ValueCell key={i} $kind="blank" $end={i === 11} />
        ))}
        <ValueCell $kind="free" />
      </React.Fragment>
    ))}
  </Sheet>
);

const RibbonBar = () => (
  <Ribbon>
    <Group $w={127}>
      <GroupBody>
        <BigButton $w={44} $muted>
          <PasteIcon />
          Beillesztés
          <Caret $color="#aaa" style={{ marginTop: 4 }} />
        </BigButton>
        <SmallColumn>
          <SmallButton><Scissors size={11} color="#666" />Kivágás</SmallButton>
          <SmallButton><Copy size={11} color="#666" />Másolás <Caret /></SmallButton>
          <SmallButton><BrushIcon />Formátummásoló</SmallButton>
        </SmallColumn>
      </GroupBody>
      <GroupLabel>Vágólap</GroupLabel>
      <Launcher />
    </Group>

    <Group $w={138}>
      <GroupBody>
        <ControlStack>
          <ControlRow $gap={1}>
            <SelectBox $w={74}>Calibri <Caret /></SelectBox>
            <SelectBox $w={27}>11 <Caret /></SelectBox>
            <Glyph $size={11} $ml={4}>Aˆ</Glyph>
            <Glyph $size={9} $ml={4}>Aˇ</Glyph>
          </ControlRow>
          <ControlRow $gap={4}>
            <Glyph $bold $ml={3}>F</Glyph>
            <Glyph $bold $italic $ml={4}>D</Glyph>
            <Glyph $under $ml={4}>A</Glyph>
            <Caret />
            <Divider />
            <BordersIcon />
            <Caret />
            <Divider />
            <FillIcon />
            <Caret />
            <FontColorIcon />
            <Caret />
          </ControlRow>
        </ControlStack>
      </GroupBody>
      <GroupLabel>Betűtípus</GroupLabel>
      <Launcher />
    </Group>

    <Group $w={188}>
      <GroupBody>
        <ControlStack>
          <ControlRow $gap={1}>
            <Spacer $w={2} />
            <AlignLines rows={[11, 11]} />
            <AlignLines rows={[11, 11]} />
            <ActiveAlign><AlignLines rows={[9, 9]} c="#777" /></ActiveAlign>
            <Divider />
            <OrientIcon />
            <Caret />
            <Divider />
            <Spacer $w={12} />
            <WrapIcon />
            Sortöréssel több sorba
          </ControlRow>
          <ControlRow $gap={2}>
            <Spacer $w={1} />
            <AlignLines rows={[11, 7, 11]} />
            <AlignLines rows={[11, 7, 11]} />
            <AlignLines rows={[11, 7, 11]} />
            <Divider />
            <AlignLines rows={[11, 9, 11]} c="#3a78b5" />
            <AlignLines rows={[11, 9, 11]} c="#3a78b5" />
            <Divider />
            <MergeIcon />
            Cellaegyesítés
            <Caret style={{ marginLeft: 8 }} />
          </ControlRow>
        </ControlStack>
      </GroupBody>
      <GroupLabel>Igazítás</GroupLabel>
      <Launcher />
    </Group>

    <Group $w={96}>
      <GroupBody>
        <ControlStack style={{ paddingLeft: 5 }}>
          <ControlRow><SelectBox $w={86}>Általános <Caret /></SelectBox></ControlRow>
          <ControlRow $gap={3}>
            <MoneyIcon />
            <Caret />
            <Glyph $size={11} $ml={2} style={{ fontFamily: 'Open Sans' }}>%</Glyph>
            <span>000</span>
            <Divider />
            <span style={{ fontSize: 6.5, lineHeight: '7px', color: '#3a78b5' }}>+,0<br />,00</span>
            <span style={{ fontSize: 6.5, lineHeight: '7px', color: '#888' }}>,00<br />-,0</span>
          </ControlRow>
        </ControlStack>
      </GroupBody>
      <GroupLabel>Szám</GroupLabel>
      <Launcher />
    </Group>

    <Group $w={395}>
      <GroupBody>
        <BigButton $w={43}>
          <CondIcon />
          Feltételes
          <span>formázás <Caret /></span>
        </BigButton>
        <BigButton $w={52}>
          <TableStyleIcon />
          Formázás
          <span>táblázatként <Caret /></span>
        </BigButton>
        <Gallery>
          <StyleGrid>
            <StyleCell $bg="#fff" $fg="#222" $border="2px solid #c4c4c4">Normál</StyleCell>
            <StyleCell $bg="#c6efce" $fg="#3f9a4f">Jó</StyleCell>
            <StyleCell $bg="#ffc7ce" $fg="#9c0006">Rossz</StyleCell>
            <StyleCell $bg="#ffeb9c" $fg="#9c6500">Semleges</StyleCell>
            <StyleCell $bg="#fac090" $fg="#3f3f76">Bevitel</StyleCell>
            <StyleCell $bg="#9a9a9a" $fg="#fff" $border="2px solid #4a4a4a" $bold>Ellenőrzőcella</StyleCell>
            <StyleCell $bg="#fff" $fg="#e02020">Figyelmezte...</StyleCell>
            <StyleCell $bg="#fff" $fg="#d87a18" $under="#e8a060">Hivatkozott ...</StyleCell>
          </StyleGrid>
          <GalleryScroll>
            <ScrollCell $muted><Caret style={{ transform: 'rotate(180deg)' }} /></ScrollCell>
            <ScrollCell><Caret /></ScrollCell>
            <ScrollCell><Caret /></ScrollCell>
          </GalleryScroll>
        </Gallery>
      </GroupBody>
      <GroupLabel>Stílusok</GroupLabel>
    </Group>

    <Group $w={107}>
      <GroupBody style={{ paddingLeft: 3 }}>
        <BigButton $w={33}><InsertIcon />Beszúrás<Caret style={{ marginTop: 3 }} /></BigButton>
        <BigButton $w={28}><DeleteIcon />Törlés<Caret style={{ marginTop: 3 }} /></BigButton>
        <BigButton $w={39}><FormatIcon />Formátum<Caret style={{ marginTop: 3 }} /></BigButton>
      </GroupBody>
      <GroupLabel>Cellák</GroupLabel>
    </Group>

    <Group $w={150}>
      <GroupBody style={{ paddingLeft: 5 }}>
        <SmallColumn style={{ width: 66 }}>
          <SmallButton><Sigma size={12} color="#444" strokeWidth={2.4} />AutoSzum <Caret style={{ marginLeft: 5 }} /></SmallButton>
          <SmallButton><FillDownIcon />Kitöltés <Caret /></SmallButton>
          <SmallButton><EraserIcon />Törlés <Caret /></SmallButton>
        </SmallColumn>
        <BigButton $w={35} $muted><SortIcon />Rendezés<span>és szűrés <Caret $color="#aaa" /></span></BigButton>
        <BigButton $w={41}><FindIcon />Keresés és<span>kijelölés <Caret /></span></BigButton>
      </GroupBody>
      <GroupLabel>Szerkesztés</GroupLabel>
    </Group>
    <CollapseRibbon />
  </Ribbon>
);

const FieldPane = () => (
  <Pane>
    <PaneHead>
      <PaneTitle>Kimutatásmezők</PaneTitle>
      <PaneTools><Caret $color="#777" /><X size={10} color="#555" /></PaneTools>
    </PaneHead>
    <ChooseRow>
      <span>Válassza ki a jelentésbe felvenni kívánt<br />mezőket:</span>
      <ToolsBtn><Settings size={10} color="#777" /><Caret /></ToolsBtn>
    </ChooseRow>
    <SearchBox>Keresés<Search size={9} color="#2a7ab5" /></SearchBox>
    <FieldList>
      {fields.map(([name, on]) => (
        <FieldRow key={name} $on={on}>
          <Box>{on && <Check size={7} strokeWidth={2} />}</Box>
          {name}
        </FieldRow>
      ))}
      <MoreTables>További táblák...</MoreTables>
    </FieldList>
    <DragHint>Húzza a mezőket a lenti területek közé:</DragHint>
    <AreaGrid>
      <Area>
        <AreaHead><Filter size={8} color="#999" fill="#999" />Szűrők</AreaHead>
        <AreaBody />
      </Area>
      <Area>
        <AreaHead><FrozenIcon />Oszlopok</AreaHead>
        <AreaBody><AreaChip>Hónap <Caret /></AreaChip></AreaBody>
      </Area>
      <Area>
        <AreaHead><RowsIcon />Sorok</AreaHead>
        <AreaBody><AreaChip>Vevő <Caret /></AreaChip></AreaBody>
      </Area>
      <Area>
        <AreaHead><Sigma size={8} color="#888" />Értékek</AreaHead>
        <AreaBody><AreaChip>Összeg / Nettó <Caret /></AreaChip></AreaBody>
      </Area>
    </AreaGrid>
    <DeferRow>
      <Box />
      Elrendezésfrissítés elhalasztása
      <RefreshBtn>Frissítés</RefreshBtn>
    </DeferRow>
  </Pane>
);

const App: React.FC = () => (
  <>
    <GlobalStyle />
    <Page>
      <BlackBar $h={12} />
      <TitleBar>
        <QuickAccess>
          <SaveIcon />
          <Spacer $w={3} />
          <UndoIcon c="#fff" />
          <Caret $color="#fff" />
          <Spacer $w={2} />
          <RedoIcon c="#5f9d7c" />
          <Caret $color="#5f9d7c" />
          <Spacer $w={2} />
          <Caret $color="#dce" />
        </QuickAccess>
        <ContextBlock>Kimutatáseszközök</ContextBlock>
        <DocTitle>Test Kft -  eves szamlak  -  Excel</DocTitle>
        <LeafPattern />
        <UserArea>
          <UserName>László Németh</UserName>
          <WinButton>
            <svg width="10" height="7" viewBox="0 0 10 7" fill="none" stroke="#fff"><rect x=".5" y=".5" width="9" height="6" /><path d="M5 1v3M3.500 3L5 4.500 6.500 3" /></svg>
          </WinButton>
          <WinButton><Minus size={9} /></WinButton>
          <WinButton>
            <svg width="9" height="9" viewBox="0 0 9 9" fill="none" stroke="#fff"><rect x=".5" y="2.500" width="6" height="6" /><path d="M2.500 2.500v-2h6v6h-2" /></svg>
          </WinButton>
          <WinButton><X size={10} /></WinButton>
        </UserArea>
      </TitleBar>

      <TabRow>
        <Tab $w={37}>Fájl</Tab>
        <Tab $w={50} $active>Kezdőlap</Tab>
        <Tab $w={50}>Beszúrás</Tab>
        <Tab $w={68}>Lapelrendezés</Tab>
        <Tab $w={50}>Képletek</Tab>
        <Tab $w={45}>Adatok</Tab>
        <Tab $w={67}>Véleményezés</Tab>
        <Tab $w={41}>Nézet</Tab>
        <ContextTabs>
          <Tab $w={45}>Elemzés</Tab>
          <Tab $w={49}>Tervezés</Tab>
        </ContextTabs>
        <TellMe><Lightbulb size={11} />Mutasd meg, hogyan csináljam</TellMe>
        <Share><User size={12} />Megosztás</Share>
      </TabRow>

      <RibbonBar />

      <FormulaRow>
        <NameBox>S3O2 <Caret /></NameBox>
        <FormulaDots>⋮</FormulaDots>
        <FormulaButtons>
          <X size={10} color="#b0b0ae" />
          <Check size={10} color="#b0b0ae" />
          <Glyph $italic $size={10}>fx</Glyph>
        </FormulaButtons>
        <FormulaInput>Oszlopcímkék <Caret /></FormulaInput>
      </FormulaRow>

      <Workspace>
        <SheetPane>
          <SheetRow>
            <SheetGrid />
            <VScroll>
              <ScrollBtn><Caret style={{ transform: 'rotate(180deg)' }} /></ScrollBtn>
              <VThumbGap />
              <VThumb />
              <ScrollBtn><Caret /></ScrollBtn>
            </VScroll>
          </SheetRow>
          <TabsBar>
            <TabNav><span>‹</span><span>›</span></TabNav>
            <SheetTab $w={53}>Szamlak1</SheetTab>
            <SheetTab $w={55}>Szamlak2</SheetTab>
            <SheetTab $w={49}>Munka1</SheetTab>
            <SheetTab $w={54}>Szamlak3</SheetTab>
            <SheetTab $w={48} $active>Munka2</SheetTab>
            <AddSheet><Plus size={8} /></AddSheet>
            <HScroll>
              <HEnd><ArrowSide $flip /></HEnd>
              <HThumb />
              <HTrack />
              <HEnd><ArrowSide /></HEnd>
            </HScroll>
          </TabsBar>
          <Chart />
          <PointerHalo><MoveCursor /></PointerHalo>
        </SheetPane>
        <FieldPane />
      </Workspace>

      <StatusBar>
        Kész
        <Stats>
          <span>Átlag: 872297,228</span>
          <span>Cellák száma: 238</span>
          <span>Összeg: 205862145,8</span>
        </Stats>
        <ViewBtns>
          <ViewBtn $on $w={23}><NormalView /></ViewBtn>
          <ViewBtn $w={24}><LayoutView /></ViewBtn>
          <ViewBtn $w={26}><BreakView /></ViewBtn>
        </ViewBtns>
        <ZoomArea>
          <Minus size={8} color="#555" />
          <ZoomTrack><ZoomThumb /></ZoomTrack>
          <Plus size={8} color="#555" />
          <ZoomValue>100%</ZoomValue>
        </ZoomArea>
      </StatusBar>
      <BlackBar $h={13} />
    </Page>
  </>
);

export default App;
